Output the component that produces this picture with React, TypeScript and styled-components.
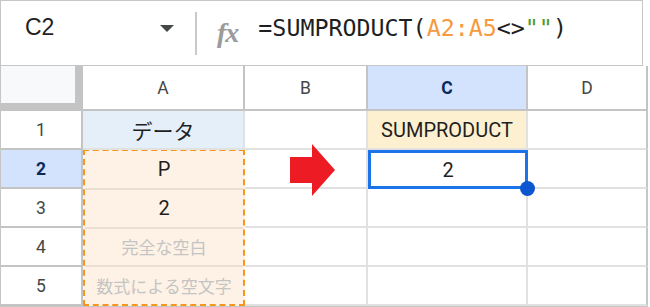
import React from "react";
import styled, { createGlobalStyle } from "styled-components";

const GlobalStyle = createGlobalStyle`
  body {
    margin: 0;
    background: #ffffff;
  }
`;

const Frame = styled.div`
  width: 650px;
  height: 307px;
  overflow: hidden;
  font-family: Roboto, "Noto Sans CJK JP", sans-serif;
`;

const FormulaBar = styled.div`
  box-sizing: border-box;
  width: 643px;
  height: 66px;
  border: 1px solid #c6c6c6;
  display: flex;
  align-items: center;
`;

const NameBox = styled.div`
  box-sizing: border-box;
  width: 194px;
  padding: 0 21px 12px 24px;
  display: flex;
  align-items: center;
  justify-content: space-between;
`;

const NameText = styled.span`
  font-family: "Liberation Sans", Arial, sans-serif;
  font-size: 23px;
  color: #1f1f1f;
`;

const Caret = styled.span`
  width: 0;
  height: 0;
  border-left: 7.5px solid transparent;
  border-right: 7.5px solid transparent;
  border-top: 7px solid #444746;
  margin-top: 2px;
`;

const Divider = styled.div`
  width: 2px;
  height: 43px;
  background: #c9c9c9;
`;

const Fx = styled.span`
  margin: 0 20px 0 20px;
  font-family: "Liberation Serif", serif;
  font-style: italic;
  font-weight: bold;
  font-size: 28px;
  color: #9b9b9b;
  letter-spacing: -1px;
`;

const Formula = styled.div`
  font-family: "DejaVu Sans Mono", monospace;
  font-size: 23.3px;
  color: #1f1f1f;
  margin-bottom: 12px;
  white-space: pre;
`;

const Token = styled.span<{ $kind: "range" | "string" }>`
  color: ${(p) => (p.$kind === "range" ? "#f59b3f" : "#4d9a2b")};
`;

const Sheet = styled.div`
  box-sizing: border-box;
  width: 648px;
  border-left: 1px solid #c6c6c6;
  border-bottom: 1px solid #c6c6c6;
  display: grid;
  grid-template-columns: 82px 162px 123px 160px 120px;
  grid-template-rows: 45px repeat(5, 39px);
`;

const Corner = styled.div`
  background: #f8f9fa;
  border-right: 8px solid #c4c4c4;
  border-bottom: 8px solid #c4c4c4;
`;

const ColHeader = styled.div<{ $active?: boolean }>`
  display: flex;
  align-items: center;
  justify-content: center;
  border-right: 2px solid #c4c4c4;
  border-bottom: 2px solid #c4c4c4;
  background: ${(p) => (p.$active ? "#d3e3fd" : "#ffffff")};
  color: ${(p) => (p.$active ? "#0b2a5e" : "#444746")};
  font-weight: ${(p) => (p.$active ? 700 : 400)};
  font-size: 17.5px;
`;

const RowHeader = styled.div<{ $active?: boolean }>`
  display: flex;
  align-items: center;
  justify-content: center;
  border-right: 2px solid #c4c4c4;
  border-bottom: 2px solid #c4c4c4;
  background: ${(p) => (p.$active ? "#d3e3fd" : "#ffffff")};
  color: ${(p) => (p.$active ? "#0b2a5e" : "#444746")};
  font-weight: ${(p) => (p.$active ? 700 : 400)};
  font-size: 17.5px;
`;

const Cell = styled.div<{ $bg?: string; $edge?: boolean }>`
  position: relative;
  display: flex;
  align-items: center;
  justify-content: center;
  border-right: 2px solid ${(p) => (p.$edge ? "#c6c6c6" : "#e1e1e1")};
  border-bottom: 2px solid #e1e1e1;
  background: ${(p) => p.$bg ?? "#ffffff"};
  color: #1f1f1f;
  font-size: 20px;
`;

const SelectedCell = styled(Cell)`
  border: 3px solid #1a73e8;
  z-index: 2;
`;

const FillHandle = styled.span`
  position: absolute;
  right: -10px;
  bottom: -10px;
  width: 15px;
  height: 15px;
  border-radius: 50%;
  background: #0b57d0;
`;

const RangeBox = styled.div`
  grid-column: 2;
  grid-row: 3 / span 4;
  box-sizing: border-box;
  margin-top: -1px;
  border: 2px dashed #f5961f;
  background: #fdf2e5;
  display: flex;
  flex-direction: column;
`;

const RangeSlot = styled.div<{ $muted?: boolean }>`
  flex: 1;
  display: flex;
  align-items: center;
  justify-content: center;
  border-bottom: 2px solid #eadfd1;
  color: ${(p) => (p.$muted ? "#c4c4c4" : "#1f1f1f")};
  font-size: ${(p) => (p.$muted ? "17px" : "20px")};
  &:last-child {
    border-bottom: none;
  }
`;

const Arrow = styled.svg`
  position: absolute;
  left: 45px;
  top: -6px;
  z-index: 1;
`;

const columns = ["A", "B", "C", "D"];

const App = () => {
  return (
    <Frame>
      <GlobalStyle />
      <FormulaBar>
        <NameBox>
          <NameText>C2</NameText>
          <Caret />
        </NameBox>
        <Divider />
        <Fx>fx</Fx>
        <Formula>
          =SUMPRODUCT(<Token $kind="range">A2:A5</Token>&lt;&gt;
          <Token $kind="string">""</Token>)
        </Formula>
      </FormulaBar>
      <Sheet>
        <Corner />
        {columns.map((c) => (
          <ColHeader key={c} $active={c === "C"}>
            {c}
          </ColHeader>
        ))}

        <RowHeader>1</RowHeader>
        <Cell $bg="#e4effa" style={{ fontSize: 21 }}>データ</Cell>
        <Cell />
        <Cell $bg="#fdf0d0">SUMPRODUCT</Cell>
        <Cell $edge />

        <RowHeader $active>2</RowHeader>
        <RangeBox>
          <RangeSlot>P</RangeSlot>
          <RangeSlot>2</RangeSlot>
          <RangeSlot $muted>完全な空白</RangeSlot>
          <RangeSlot $muted>数式による空文字</RangeSlot>
        </RangeBox>
        <Cell>
          <Arrow width="45" height="52" viewBox="0 0 45 52">
            <path d="M0 13H22V0L45 26L22 52V39H0Z" fill="#ed1c24" />
          </Arrow>
        </Cell>
        <SelectedCell>
          2
          <FillHandle />
        </SelectedCell>
        <Cell $edge />

        {[3, 4, 5].map((r) => (
          <React.Fragment key={r}>
            <RowHeader>{r}</RowHeader>
            <Cell style={{ gridColumn: 3 }} />
            <Cell />
            <Cell $edge />
          </React.Fragment>
        ))}
      </Sheet>
    </Frame>
  );
};

export default App;
